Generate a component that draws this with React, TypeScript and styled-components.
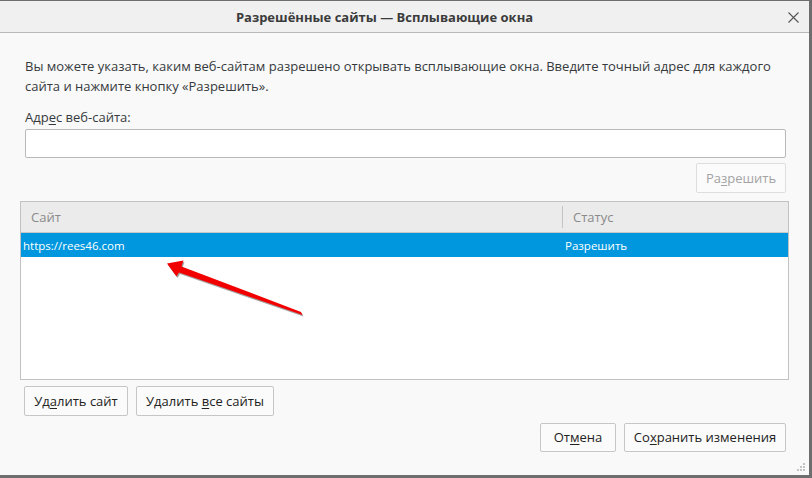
import React from "react";
import styled, { createGlobalStyle } from "styled-components";

const Global = createGlobalStyle`
  html, body { margin: 0; padding: 0; background: #f9f9f9; }
  * { box-sizing: border-box; }
`;

const Window = styled.div`
  position: relative;
  width: 812px;
  height: 478px;
  display: flex;
  flex-direction: column;
  border-top: 1px solid #6e6e6e;
  border-right: 3px solid #6e6e6e;
  border-bottom: 3px solid #6e6e6e;
  background: #f9f9f9;
  font-family: "Open Sans", "Liberation Sans", sans-serif;
  color: #333;
  overflow: hidden;
`;

const TitleBar = styled.div`
  position: relative;
  height: 32px;
  flex: none;
  background: #f0f0f0;
  border-bottom: 1px solid #b9b9b9;
  display: flex;
  align-items: center;
  justify-content: center;
  padding-right: 40px;
`;

const Title = styled.div`
  font-size: 13px;
  font-weight: 700;
  color: #3b3b3b;
`;

const CloseButton = styled.div`
  position: absolute;
  right: 5px;
  top: 5px;
  width: 22px;
  height: 22px;
  display: flex;
  align-items: center;
  justify-content: center;
`;

const Body = styled.div`
  flex: 1;
  display: flex;
  flex-direction: column;
  padding: 23px 20px 0 20px;
`;

const Description = styled.p`
  margin: 0 0 0 5px;
  font-size: 13px;
  line-height: 20px;
  color: #36393d;
`;

const Label = styled.div`
  margin: 11px 0 0 5px;
  font-size: 13px;
  line-height: 20px;
  color: #36393d;
`;

const Key = styled.span`
  text-decoration: underline;
  text-underline-offset: 2px;
`;

const Input = styled.input`
  margin: 2px 3px 0 5px;
  height: 29px;
  border: 1px solid #b9b9b9;
  border-radius: 2px;
  background: #fff;
  outline: none;
`;

const Row = styled.div<{ $justify?: string; $top: number; $pad?: string }>`
  display: flex;
  gap: 8px;
  justify-content: ${(p) => p.$justify || "flex-start"};
  margin-top: ${(p) => p.$top}px;
  padding: ${(p) => p.$pad || "0"};
`;

const Button = styled.button<{ $disabled?: boolean; $h?: number; $w?: number; $px?: number }>`
  height: ${(p) => p.$h || 30}px;
  ${(p) => (p.$w ? `width: ${p.$w}px;` : "")}
  padding: 0 ${(p) => (p.$px ?? 10)}px;
  border: 1px solid ${(p) => (p.$disabled ? "#dedede" : "#c6c6c6")};
  border-radius: 2px;
  background: #fbfbfb;
  color: ${(p) => (p.$disabled ? "#a3a3a3" : "#222")};
  font-family: "Open Sans", "Liberation Sans", sans-serif;
  font-size: 13px;
  line-height: 1;
  white-space: nowrap;
`;

const Table = styled.div`
  margin-top: 8px;
  height: 179px;
  border: 1px solid #c2c2c2;
  background: #fff;
  display: flex;
  flex-direction: column;
`;

const HeaderRow = styled.div`
  display: grid;
  grid-template-columns: 541px 1fr;
  height: 31px;
  background: #ebebeb;
  border-bottom: 1px solid #c8c8c8;
  font-size: 13px;
  color: #8a8a8a;
`;

const HeaderCell = styled.div<{ $divider?: boolean }>`
  display: flex;
  align-items: center;
  padding-left: 10px;
  align-self: center;
  height: 22px;
  border-left: ${(p) => (p.$divider ? "1px solid #c4c4c4" : "none")};
`;

const DataRow = styled.div<{ $selected?: boolean }>`
  display: grid;
  grid-template-columns: 541px 1fr;
  height: 24px;
  align-items: center;
  background: ${(p) => (p.$selected ? "#0097de" : "transparent")};
  color: ${(p) => (p.$selected ? "#fff" : "#333")};
  font-size: 11.5px;
`;

const DataCell = styled.div<{ $pad: number }>`
  padding-left: ${(p) => p.$pad}px;
  white-space: nowrap;
`;

const Arrow = styled.svg`
  position: absolute;
  left: 150px;
  top: 249px;
  width: 170px;
  height: 80px;
  overflow: visible;
`;

const Grip = styled.svg`
  position: absolute;
  right: 3px;
  bottom: 3px;
  width: 10px;
  height: 10px;
`;

export default function App() {
  const arrowPath =
    "M17 13.5 L33.5 10.5 L31.5 16.5 L151 62 L152.5 65 L29 22.5 L26.5 26.5 Z";
  return (
    <>
      <Global />
      <Window>
        <TitleBar>
          <Title>Разрешённые сайты — Всплывающие окна</Title>
          <CloseButton>
            <svg width="11" height="11" viewBox="0 0 11 11">
              <path d="M0.5 0.5 L10.5 10.5 M10.5 0.5 L0.5 10.5" stroke="#555" strokeWidth="1.1" />
            </svg>
          </CloseButton>
        </TitleBar>
        <Body>
          <Description>
            Вы можете указать, каким веб-сайтам разрешено открывать всплывающие окна. Введите точный адрес для каждого сайта и нажмите кнопку «Разрешить».
          </Description>
          <Label>
            Адр<Key>е</Key>с веб-сайта:
          </Label>
          <Input type="text" />
          <Row $justify="flex-end" $top={5} $pad="0 3px 0 0">
            <Button $disabled $w={90} $px={0}>
              Ра<Key>з</Key>решить
            </Button>
          </Row>
          <Table>
            <HeaderRow>
              <HeaderCell>Сайт</HeaderCell>
              <HeaderCell $divider>Статус</HeaderCell>
            </HeaderRow>
            <DataRow $selected>
              <DataCell $pad={2}>https://rees46.com</DataCell>
              <DataCell $pad={3}>Разрешить</DataCell>
            </DataRow>
          </Table>
          <Row $top={6} $pad="0 0 0 4px">
            <Button $w={104} $px={0}>
              Уд<Key>а</Key>лить сайт
            </Button>
            <Button $w={138} $px={0}>
              Удалить <Key>в</Key>се сайты
            </Button>
          </Row>
          <Row $justify="flex-end" $top={7} $pad="0 3px 0 0">
            <Button $h={29} $w={76} $px={0}>
              От<Key>м</Key>ена
            </Button>
            <Button $h={29} $w={162} $px={0}>
              Со<Key>х</Key>ранить изменения
            </Button>
          </Row>
        </Body>
        <Arrow viewBox="0 0 170 80">
          <path d={arrowPath} fill="#555" opacity="0.55" transform="translate(1 1.5)" />
          <path d={arrowPath} fill="#f20000" />
        </Arrow>
        <Grip viewBox="0 0 10 10">
          <rect x="7" y="1" width="2" height="2" fill="#c4c4c4" />
          <rect x="4" y="4" width="2" height="2" fill="#c4c4c4" />
          <rect x="7" y="4" width="2" height="2" fill="#c4c4c4" />
          <rect x="1" y="7" width="2" height="2" fill="#c4c4c4" />
          <rect x="4" y="7" width="2" height="2" fill="#c4c4c4" />
          <rect x="7" y="7" width="2" height="2" fill="#c4c4c4" />
        </Grip>
      </Window>
    </>
  );
}
